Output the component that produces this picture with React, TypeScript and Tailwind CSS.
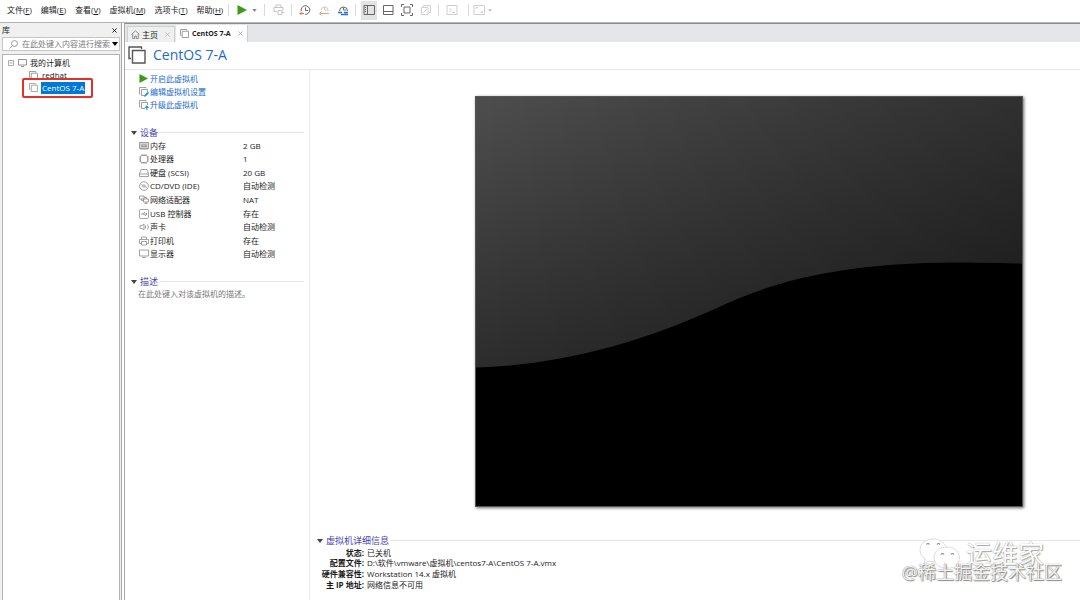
import type { ReactNode } from "react";

const menus = [
  { label: "文件", hotkey: "F" },
  { label: "编辑", hotkey: "E" },
  { label: "查看", hotkey: "V" },
  { label: "虚拟机", hotkey: "M" },
  { label: "选项卡", hotkey: "T" },
  { label: "帮助", hotkey: "H" },
];

const devices = [
  { icon: "memory", name: "内存", value: "2 GB" },
  { icon: "cpu", name: "处理器", value: "1" },
  { icon: "disk", name: "硬盘 (SCSI)", value: "20 GB" },
  { icon: "cd", name: "CD/DVD (IDE)", value: "自动检测" },
  { icon: "network", name: "网络适配器", value: "NAT" },
  { icon: "usb", name: "USB 控制器", value: "存在" },
  { icon: "sound", name: "声卡", value: "自动检测" },
  { icon: "printer", name: "打印机", value: "存在" },
  { icon: "display", name: "显示器", value: "自动检测" },
];

const details = [
  { name: "状态:", value: "已关机" },
  { name: "配置文件:", value: "D:\\软件\\vmware\\虚拟机\\centos7-A\\CentOS 7-A.vmx" },
  { name: "硬件兼容性:", value: "Workstation 14.x 虚拟机" },
  { name: "主 IP 地址:", value: "网络信息不可用" },
];

const shapes: Record<string, ReactNode> = {
  memory: <><path d="M.5 1.500h9v6h-9z" fill="#d4d4d4" /><path d="M2 4h6M2 5.500h6M2 7.500V9M4 7.500V9M6 7.500V9M8 7.500V9" /></>,
  cpu: <><rect x="1.500" y="1.500" width="7" height="7" rx="1.500" /><path d="M3 0v1.500M5 0v1.500M7 0v1.500M3 8.500V10M5 8.500V10M7 8.500V10M0 3h1.500M0 5h1.500M0 7h1.500M8.500 3H10M8.500 5H10M8.500 7H10" /></>,
  disk: <path d="M.5 6 2 1.500h6L9.500 6v2.500h-9zM.5 6h9" />,
  cd: <><circle cx="5" cy="5" r="4.300" /><circle cx="5" cy="5" r="1.200" /><path d="M2.500 3.500 4 4.500M6 5.500l1.500 1" /></>,
  network: <path d="M.5 1h4.500v3H.5zM2.500 4v1.500h2M5 2.500h2.500v1.500M4.500 4h5v3h-5zM7 7v1.500M5.500 8.500h3" />,
  usb: <><rect x=".5" y=".5" width="9" height="9" rx="1" /><path d="M2 5h6M3.500 5 5 3.500h1M4.500 5 6 6.500h1M7 4l1 1-1 1" /></>,
  sound: <path d="M1 3.500h2L5 2v6L3 6.500H1zM6.500 3.500v3M8.500 2.500c1 1.500 1 3.500 0 5" />,
  printer: <path d="M2.500 3V1h5v2M2.500 7.500h-2v-4h9v4h-2M2.500 5.500h5V9h-5z" />,
  display: <path d="M.5 1h9v6h-9zM3 8.500h4" />,
};

function Icon({ name }: { name: string }) {
  return (
    <svg className="size-[10px] shrink-0" viewBox="0 0 10 10" fill="none" stroke="#8c8c8c" strokeWidth=".8">
      {shapes[name]}
    </svg>
  );
}

function Play({ className }: { className: string }) {
  return (
    <svg className={className} viewBox="0 0 10 10" fill="#3f9a14">
      <path d="M.5 0 10 5 .5 10z" />
    </svg>
  );
}

function Caret({ className }: { className: string }) {
  return (
    <svg className={className} viewBox="0 0 6 4" fill="currentColor">
      <path d="M0 0h6L3 4z" />
    </svg>
  );
}

// two stacked window frames, used for every virtual machine entry
function VmIcon({ className }: { className: string }) {
  return (
    <svg className={className} viewBox="0 0 18 18" fill="none" stroke="currentColor" strokeWidth="1.400">
      <path d="M3 12.500H1V1h12.500v2" />
      <path d="M4.500 4.500h12.500V17H4.500z" fill="#fff" />
    </svg>
  );
}

function VmActionIcon({ up = false }: { up?: boolean }) {
  return (
    <svg className="size-[10px] shrink-0" viewBox="0 0 10 10" fill="none" stroke="#8a8a8a" strokeWidth=".8">
      <path d="M1.500 7H.5V.5H7v1M6 8.500H2.500v-6h6V5" />
      {up ? (
        <path d="M7.800 10V6M6 7.800 7.800 6l1.800 1.800" stroke="#1a9ad8" strokeWidth="1.200" />
      ) : (
        <path d="m5.500 9.500.6-1.800L8.800 5l1 1-2.700 2.700z" fill="#1a9ad8" stroke="#1a9ad8" strokeWidth=".6" />
      )}
    </svg>
  );
}

function Close({ className }: { className: string }) {
  return (
    <svg className={className} viewBox="0 0 6 6" fill="none" stroke="currentColor">
      <path d="m.5.500 5 5M5.500.5l-5 5" />
    </svg>
  );
}

function ToolButton({ label, active, children }: { label: string; active?: boolean; children: ReactNode }) {
  return (
    <button type="button" aria-label={label} className="flex h-[19px] w-[19px] items-center justify-center">
      <span className={active ? "flex h-[19px] w-4 items-center justify-center bg-[#e3e3e3]" : "flex"}>
        <svg className="size-3" viewBox="0 0 12 12" fill="none" stroke="#666">
          {children}
        </svg>
      </span>
    </button>
  );
}

function Separator() {
  return <span className="mx-[3px] h-3 w-px bg-[#dadada]" />;
}

function Toolbar() {
  return (
    <div className="flex items-center">
      <span className="mr-2 h-3 w-px bg-[#dadada]" />
      <button type="button" aria-label="开机" className="flex w-[10px]"><Play className="size-[10px]" /></button>
      <button type="button" aria-label="电源选项" className="ml-[5px] mr-1 flex w-[5px] text-[#888]"><Caret className="h-[3px] w-[5px]" /></button>
      <Separator />
      <span className="ml-px flex">
        <ToolButton label="发送 Ctrl+Alt+Del">
          <path d="M3 3.500V1h5v2M1 3.500h9v3M1 3.500v4h3M5 6.500h4v4H5zM9 8.500h2.500" stroke="#c4c4c4" />
        </ToolButton>
      </span>
      <Separator />
      <ToolButton label="拍摄快照">
        <path d="M2.300 7.200A4.300 4.300 0 1 1 6 10.300M6.500 3.500V6.500H9" />
        <path d="M1 9.500h4M2.500 8 1 9.500 2.500 11" stroke="#f26b3a" />
      </ToolButton>
      <ToolButton label="恢复快照">
        <path d="M3 6a3.500 3.500 0 1 1 7 1M6.500 3.500V6H8.500" stroke="#c8c8c8" />
        <path d="M1.500 9.500H11M3.500 7.500l-2 2 2 2" stroke="#f0a184" />
      </ToolButton>
      <ToolButton label="管理快照">
        <path d="M2.500 7a4 4 0 1 1 8 0M6.500 3.500V6H9" />
        <path d="M1 8.500h4M4 10.500h7M7 8.500h4" stroke="#1675cf" strokeWidth="1.500" />
      </ToolButton>
      <Separator />
      <ToolButton label="显示库" active>
        <path d="M1 1.500h10.500v9H1zM4.500 1.500v9M2 3.500h1M2 5.500h1M2 7.500h1" />
      </ToolButton>
      <ToolButton label="显示缩略图栏">
        <path d="M1.500 1.500h9.500v9H1.500zM1.500 7.500H11" />
      </ToolButton>
      <ToolButton label="全屏">
        <path d="M.5 3V.5H3M9 .5h2.500V3M11.500 9v2.500H9M3 11.500H.5V9M3 3h6v6H3z" />
      </ToolButton>
      <ToolButton label="Unity 模式">
        <path d="M3.500 3V1.500h7v7H9M1.500 3.500h6.500v7H1.500zM3.500 8.500 7 5" stroke="#d0d0d0" />
      </ToolButton>
      <Separator />
      <ToolButton label="控制台视图">
        <path d="M1 1.500h10v9H1zM3.500 4l2 2-2 2M6 8.500h3" stroke="#cfcfcf" />
      </ToolButton>
      <span className="ml-[7px] h-3 w-px bg-[#dadada]" />
      <ToolButton label="拉伸">
        <path d="M1 1.500h10.500v9H1zM3 5V3.500h2M7.500 8.500h2V7" stroke="#cfcfcf" />
      </ToolButton>
      <Caret className="h-[3px] w-1 text-[#bbb]" />
    </div>
  );
}

function Library() {
  return (
    <aside className="flex w-[122px] shrink-0 flex-col border-r border-[#a6a6a6] bg-[#f0f0f0] pl-[2px] pr-px">
      <div className="flex h-[14px] items-center justify-between pr-[3px]">
        <h2 className="text-[8px] leading-none">库</h2>
        <button type="button" aria-label="关闭库"><Close className="size-[5px] text-black" /></button>
      </div>
      <label className="flex h-[14px] items-center border border-[#c6c6c6] bg-white pl-[6px] pr-px">
        <svg className="size-[9px] shrink-0" viewBox="0 0 9 9" fill="none" stroke="#888" strokeWidth=".8">
          <circle cx="5.500" cy="3.500" r="3" />
          <path d="M3.400 5.600.5 8.500" />
        </svg>
        <input
          type="text"
          aria-label="搜索"
          placeholder="在此处键入内容进行搜索"
          className="ml-1 h-3 w-0 flex-1 bg-transparent text-[8px] leading-3 outline-none placeholder:text-[#777]"
        />
        <Caret className="h-1 w-[6px] shrink-0 text-black" />
      </label>
      <div className="mt-[3px] flex-1 border border-b-0 border-[#b4b4b4] bg-white pt-[2px] text-[8px] leading-3">
        <div className="flex h-3 items-center pl-[5px]">
          <svg className="size-[6px]" viewBox="0 0 6 6" fill="none" stroke="#999" strokeWidth=".8">
            <path d="M.5.500h5v5h-5zM1.500 3h3" />
          </svg>
          <svg className="ml-1 h-2 w-[9px]" viewBox="0 0 9 8" fill="none" stroke="#777" strokeWidth=".8">
            <path d="M.5.500h8v5.500h-8zM3 7.500h3" />
          </svg>
          <span className="ml-[3px]">我的计算机</span>
        </div>
        <ul>
          <li className="flex h-3 items-center pl-[26px]">
            <VmIcon className="size-[9px] text-[#777]" />
            <span className="ml-1">redhat</span>
          </li>
          <li className="relative flex h-[13px] items-center pl-[26px]">
            <VmIcon className="size-[9px] text-[#888]" />
            <span className="ml-[3px] bg-[#0078d7] px-px text-white">CentOS 7-A</span>
            <span className="absolute -top-[3px] left-[19px] h-5 w-[71px] rounded-[2px] border-2 border-[#e0322b]" />
          </li>
        </ul>
      </div>
    </aside>
  );
}

function Tabs() {
  return (
    <div className="flex h-[19px] items-end border-t border-[#8a8e91] bg-[#e4e6e7] pl-[2px]">
      <div className="flex h-4 w-[48px] items-center border border-b-0 border-[#cfcfcf] bg-[#eeefef] pl-[3px]">
        <svg className="size-[9px] text-[#777]" viewBox="0 0 9 9" fill="none" stroke="currentColor" strokeWidth=".8">
          <path d="M.5 4.500 4.500.8l4 3.700M1.700 4v4.500h2V6h1.600v2.500h2V4" />
        </svg>
        <button type="button" className="ml-[2px] text-[8px] leading-none">主页</button>
        <button type="button" aria-label="关闭主页" className="ml-[7px]"><Close className="size-[5px] text-[#bbb]" /></button>
      </div>
      <div className="ml-px flex h-[17px] w-[72px] items-center border-r border-[#cfcfcf] bg-white pl-1">
        <VmIcon className="size-[9px] text-[#777]" />
        <button type="button" className="ml-[3px] whitespace-nowrap text-[7px] font-bold leading-none">CentOS 7-A</button>
        <button type="button" aria-label="关闭 CentOS 7-A" className="ml-auto mr-1"><Close className="size-[5px] text-[#aaa]" /></button>
      </div>
    </div>
  );
}

function SectionTitle({ children }: { children: ReactNode }) {
  return (
    <div className="flex h-[13px] items-center">
      <Caret className="h-1 w-[6px] shrink-0 text-[#444]" />
      <h2 className="ml-[3px] mr-px text-[9px] leading-none text-[#4a3fb0]">{children}</h2>
      <span className="h-px flex-1 bg-[#e6e6e6]" />
    </div>
  );
}

function Summary() {
  return (
    <div className="w-[185px] shrink-0 border-r border-[#ececec] pl-[6px] pr-[5px] pt-[2px]">
      <ul className="pl-2 text-[#1c6ccc]">
        <li className="flex h-[13px] items-center gap-px">
          <Play className="mr-px size-[9px]" />
          <a href="#power" className="text-[8px] leading-none">开启此虚拟机</a>
        </li>
        <li className="flex h-[13px] items-center gap-px">
          <VmActionIcon />
          <a href="#settings" className="text-[8px] leading-none">编辑虚拟机设置</a>
        </li>
        <li className="flex h-[13px] items-center gap-px">
          <VmActionIcon up />
          <a href="#upgrade" className="text-[8px] leading-none">升级此虚拟机</a>
        </li>
      </ul>

      <div className="mt-[15px]">
        <SectionTitle>设备</SectionTitle>
        <table className="ml-2 h-[122px] text-[8px] leading-none">
          <tbody>
            {devices.map((d) => (
              <tr key={d.name}>
                <th scope="row" className="w-[104px] p-0 text-left font-normal">
                  <span className="flex items-center gap-px"><Icon name={d.icon} />{d.name}</span>
                </th>
                <td className="p-0">{d.value}</td>
              </tr>
            ))}
          </tbody>
        </table>
      </div>

      <div className="mt-[14px]">
        <SectionTitle>描述</SectionTitle>
        <p className="pl-[7px] text-[8px] leading-3 text-[#777]">在此处键入对该虚拟机的描述。</p>
      </div>
    </div>
  );
}

function Screen() {
  return (
    <div className="ml-[165px] mr-[57px] mt-[26px] border border-[#555] bg-black shadow-[1px_1px_3px_rgba(0,0,0,0.6)]">
      <svg className="block w-full" viewBox="0 0 547 410" preserveAspectRatio="none">
        <defs>
          <linearGradient id="sheen" gradientUnits="userSpaceOnUse" x1="60" y1="0" x2="130" y2="290">
            <stop offset="0" stopColor="#4c4c4c" />
            <stop offset="1" stopColor="#262626" />
          </linearGradient>
          <linearGradient id="shade" x1="0" y1="0" x2="1" y2="0">
            <stop offset="0" stopColor="#000" stopOpacity="0" />
            <stop offset="1" stopColor="#000" stopOpacity=".22" />
          </linearGradient>
        </defs>
        <rect width="547" height="410" fill="url(#sheen)" />
        <rect width="547" height="410" fill="url(#shade)" />
        <path d="M0 271C80 269 160 248 238 213C290 188 360 164 500 166Q525 166 547 167V410H0z" fill="#000" />
      </svg>
    </div>
  );
}

function Watermark() {
  return (
    <div className="absolute bottom-[19px] right-[18px]">
      <div className="-mb-1 flex h-[27px] items-center justify-end pr-[18px] text-white [text-shadow:0_0_1px_#888,1px_1px_1px_#aaa]">
        <svg className="mr-1 h-[34px] w-[44px]" viewBox="0 0 44 34" fill="#fff" stroke="#d2d2d2" strokeWidth=".8">
          <path d="M15 2C7 2 2 7 2 13c0 4 2 7 5 9l-1 5 5-3c10 3 19-3 18-11C28 6 22 2 15 2z" />
          <path d="M29 10c-8 0-13 5-13 11s6 11 14 10c2 0 3 0 4-1l5 3-1-5c7-6 3-18-9-18z" />
          <path d="M8.500 7.500q1.500-2 3 0M19 7.500q1.500-2 3 0M23 17.500q1.500-2 3 0M33 17.500q1.500-2 3 0" fill="none" stroke="#888" strokeWidth="1.200" />
        </svg>
        <span className="text-[26px] leading-none">运维家</span>
      </div>
      <div className="text-[18px] leading-none text-[#f4f4f4] [text-shadow:0_0_1px_#666,1px_1px_1px_#888]">@稀土掘金技术社区</div>
    </div>
  );
}

export default function App() {
  return (
    <div className="relative flex min-h-screen flex-col bg-white font-['Open_Sans','Noto_Sans_CJK_SC',sans-serif] text-[#1a1a1a]">
      <header className="flex h-[22px] items-center pb-[2px]">
        <nav className="flex w-[228px] gap-[9px] pl-[7px]">
          {menus.map((m) => (
            <button key={m.hotkey} type="button" className="whitespace-nowrap text-[8px] leading-3">
              {m.label}(<u>{m.hotkey}</u>)
            </button>
          ))}
        </nav>
        <Toolbar />
      </header>

      <div className="flex flex-1 border-t border-[#b5b5b5]">
        <Library />
        <main className="ml-[2px] flex min-w-0 flex-1 flex-col border-l border-[#a6a6a6]">
          <Tabs />
          <div className="flex h-[28px] items-center border-b border-[#e6e6e6] pb-[2px] pl-[3px]">
            <VmIcon className="size-[18px] text-[#555]" />
            <h1 className="ml-[7px] text-[14px] leading-none text-[#1c6ccc]">CentOS 7-A</h1>
          </div>
          <div className="flex flex-1">
            <Summary />
            <section className="min-w-0 flex-1">
              <Screen />
              <div className="mt-[27px] pl-[7px]">
                <SectionTitle>虚拟机详细信息</SectionTitle>
                <dl className="grid h-[43px] grid-cols-[47px_1fr] grid-rows-4 items-center gap-x-[3px] text-[8px] leading-none">
                  {details.map((d) => (
                    <div key={d.name} className="contents">
                      <dt className="whitespace-nowrap text-right font-bold">{d.name}</dt>
                      <dd>{d.value}</dd>
                    </div>
                  ))}
                </dl>
              </div>
            </section>
          </div>
        </main>
      </div>
      <Watermark />
    </div>
  );
}
